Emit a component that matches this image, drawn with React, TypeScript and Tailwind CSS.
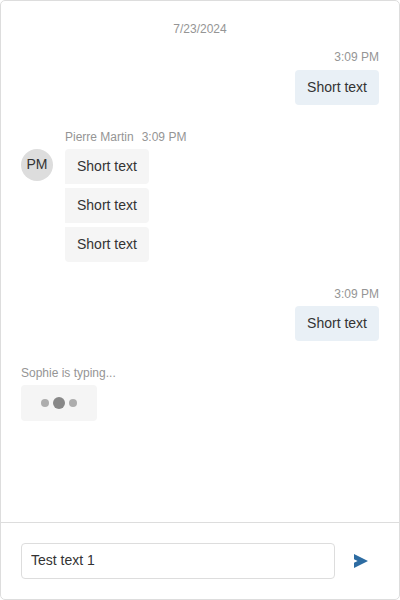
import React from 'react';

function Meta({ children, className = '' }: { children: React.ReactNode; className?: string }) {
  return <div className={`text-xs leading-[14px] text-[#959595] ${className}`}>{children}</div>;
}

function Bubble({ children, className }: { children: React.ReactNode; className: string }) {
  return <div className={`h-[35px] w-fit px-3 pt-2 text-sm leading-[18px] ${className}`}>{children}</div>;
}

function OwnMessage({ time, text, className }: { time: string; text: string; className: string }) {
  return (
    <div className={`flex flex-col items-end ${className}`}>
      <Meta>{time}</Meta>
      <Bubble className="rounded bg-[#e9f0f6]">{text}</Bubble>
    </div>
  );
}

export default function App() {
  return (
    <div className="flex h-[600px] w-[400px] flex-col rounded-[5px] border border-[#dddddd] bg-white font-['Liberation_Sans',Arial,sans-serif] text-[#333333]">
      <div className="flex flex-1 flex-col px-5 pt-[21px]">
        <Meta className="mb-[14px] text-center">7/23/2024</Meta>
        <OwnMessage time="3:09 PM" text="Short text" className="gap-[6px]" />

        <div className="mt-[25px] mb-[25px] flex gap-3">
          <div className="mt-[19px] flex size-8 shrink-0 justify-center rounded-full bg-[#dddddd] pt-[6px] text-sm leading-[18px]">
            PM
          </div>
          <div className="flex flex-col gap-1">
            <Meta className="mb-px flex gap-2">
              <span>Pierre Martin</span>
              <span>3:09 PM</span>
            </Meta>
            <Bubble className="rounded rounded-bl-none bg-[#f5f5f5]">Short text</Bubble>
            <Bubble className="rounded-r bg-[#f5f5f5]">Short text</Bubble>
            <Bubble className="rounded rounded-tl-none bg-[#f5f5f5]">Short text</Bubble>
          </div>
        </div>

        <OwnMessage time="3:09 PM" text="Short text" className="gap-[5px]" />

        <Meta className="mt-[25px] mb-[5px]">Sophie is typing...</Meta>
        <div className="flex h-9 w-[76px] items-center justify-center gap-1 rounded bg-[#f5f5f5]">
          <span className="size-2 rounded-full bg-[#adadad]" />
          <span className="size-3 rounded-full bg-[#888888]" />
          <span className="size-2 rounded-full bg-[#adadad]" />
        </div>
      </div>

      <div className="flex h-[77px] items-center border-t border-[#dddddd] pl-5">
        <input
          className="h-9 w-[314px] rounded border border-[#dddddd] px-[9px] pb-[2px] text-sm outline-none"
          defaultValue="Test text 1"
        />
        <button className="ml-2 flex size-9 items-center justify-center" aria-label="Send">
          <svg width="16" height="16" viewBox="0 0 16 16" fill="#2d6ca2">
            <path d="M1 15L15 8L1 1V6.2L4.6 8L1 9.8Z" />
          </svg>
        </button>
      </div>
    </div>
  );
}
